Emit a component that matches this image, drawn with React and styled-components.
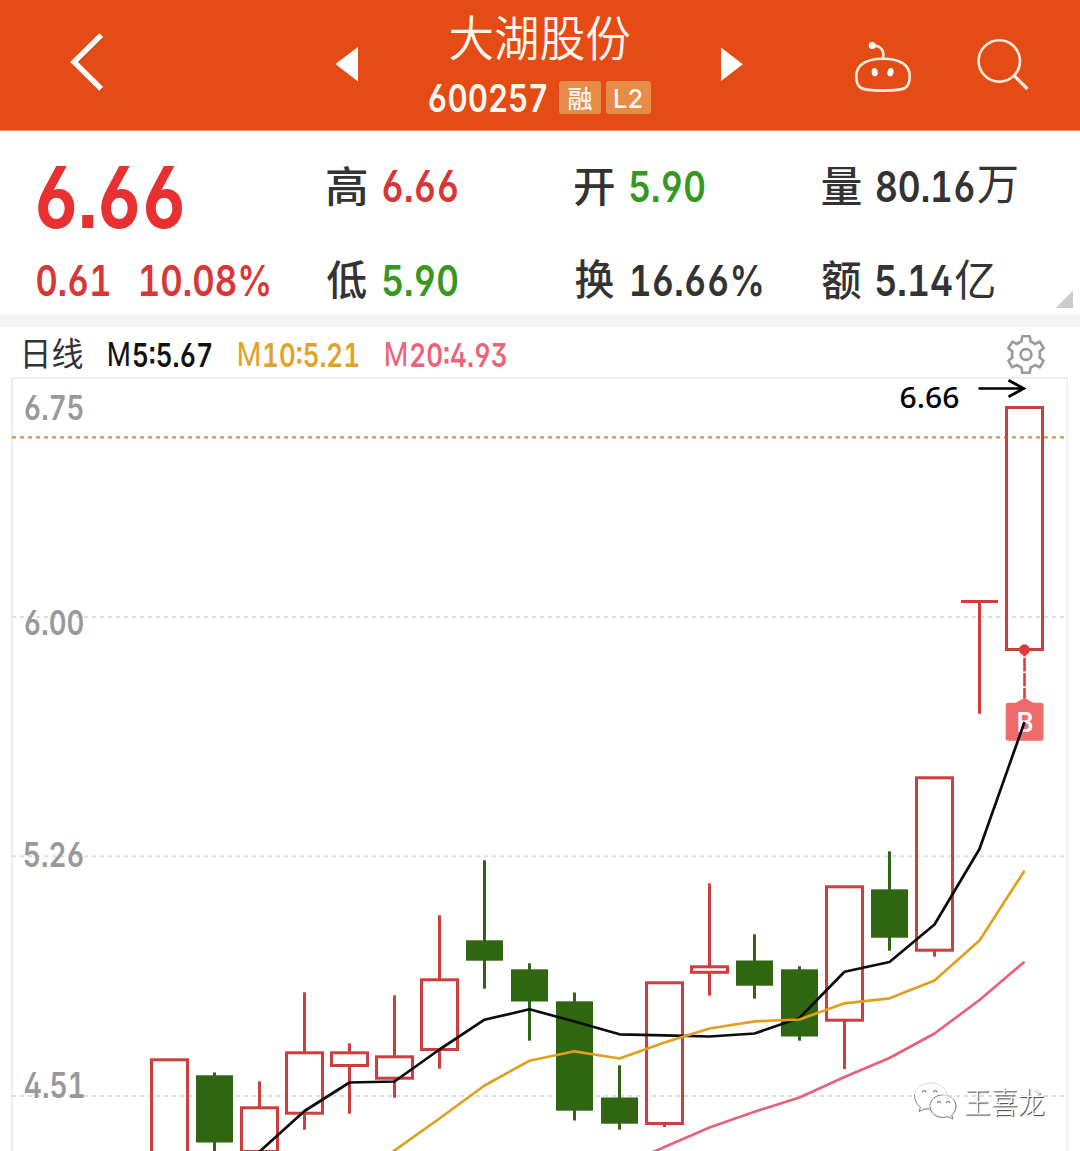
import React, { useLayoutEffect, useRef, useState } from 'react';
import styled, { createGlobalStyle } from 'styled-components';

const LATIN = 'Roboto, "Noto Sans CJK SC", sans-serif';
const DIGITS = 'Inter, Roboto, sans-serif';
const CJK = '"Noto Sans CJK SC", sans-serif';
const HUMAN = '"Noto Sans", "Open Sans", sans-serif';

const Global = createGlobalStyle`
  html, body { margin: 0; padding: 0; background: #fff; }
  body { width: 1080px; height: 1151px; overflow: hidden; font-family: ${LATIN}; }
  * { box-sizing: border-box; }
`;

/* Text whose visible glyphs fill a box of a given width and height. */
const GlyphBox = styled.span`
  display: block;
  flex: none;
  width: ${(p) => p.$w}px;
  height: ${(p) => p.$h}px;
  margin-left: ${(p) => p.$ml || 0}px;
  margin-top: ${(p) => p.$mt || 0}px;
  color: ${(p) => p.$color || 'inherit'};
`;

const Glyphs = styled.span`
  display: block;
  width: max-content;
  height: 0;
  line-height: 0;
  white-space: pre;
  transform-origin: 0 0;
  font-family: ${(p) => p.$family};
  font-weight: ${(p) => p.$weight};
  font-size: ${(p) => p.$size}px;
  font-feature-settings: 'ss01' 1, 'ss07' 1, 'tnum' 1;
  text-shadow: ${(p) => p.$shadow || 'none'};
`;

function Fit({ children, w, h, ml, mt, color, family = DIGITS, weight = 600, shadow }) {
  const ref = useRef(null);
  const [transform, setTransform] = useState('none');
  const cjk = family === CJK;
  const size = Math.round(cjk ? h * 1.07 : h / 0.73);

  useLayoutEffect(() => {
    const ctx = document.createElement('canvas').getContext('2d');
    ctx.font = `${weight} ${size}px ${family}`;
    const box = ctx.measureText(children);
    const base = (box.fontBoundingBoxAscent - box.fontBoundingBoxDescent) / 2;
    ctx.font = `${weight} ${size * 10}px ${family}`;
    const m = ctx.measureText(children);
    const ascent = m.actualBoundingBoxAscent / 10;
    // side bearings of the outer glyphs; tabular digits are centred in one common advance
    const tab = ctx.measureText('0').width;
    const bearing = (ch, side) => {
      const g = ctx.measureText(ch);
      const extra = /\d/.test(ch) ? (tab - g.width) / 2 : 0;
      const own = side === 'left' ? -g.actualBoundingBoxLeft : g.width - g.actualBoundingBoxRight;
      return (own + extra) / 10;
    };
    const left = bearing(children[0], 'left');
    const right = bearing(children[children.length - 1], 'right');
    const sx = w / (ref.current.offsetWidth - left - right);
    const sy = h / (ascent + m.actualBoundingBoxDescent / 10);
    setTransform(`translate(${-left * sx}px, ${sy * (ascent - base)}px) scale(${sx}, ${sy})`);
  }, [children, w, h, family, weight, size]);

  return (
    <GlyphBox $w={w} $h={h} $ml={ml} $mt={mt} $color={color}>
      <Glyphs ref={ref} $family={family} $weight={weight} $size={size} $shadow={shadow} style={{ transform }}>
        {children}
      </Glyphs>
    </GlyphBox>
  );
}

const Page = styled.main`
  width: 1080px;
  height: 1151px;
  display: flex;
  flex-direction: column;
  background: #fff;
  overflow: hidden;
`;

/* ---------- header ---------- */
const Header = styled.header`
  flex: none;
  height: 131px;
  display: flex;
  align-items: flex-start;
  background: #e54c15;
  border-bottom: 1px solid #e2937b;
  color: #fff8f2;
`;

const IconButton = styled.button`
  flex: none;
  padding: 0;
  border: 0;
  background: none;
  color: #fff;
  width: ${(p) => p.$w}px;
  height: ${(p) => p.$h}px;
  margin: ${(p) => p.$top}px 0 0 ${(p) => p.$left || 0}px;
  svg { display: block; overflow: visible; }
`;

const Heading = styled.div`
  width: 363px;
  padding-top: 16.5px;
  display: flex;
  flex-direction: column;
  align-items: center;
  gap: 20.5px;
`;

const CodeRow = styled.div`
  height: 33px;
  margin-left: 1.5px;
  display: flex;
  align-items: center;
`;

const Badge = styled.span`
  width: ${(p) => p.$w}px;
  height: 33px;
  margin-left: ${(p) => p.$ml}px;
  display: flex;
  align-items: center;
  justify-content: center;
  border-radius: 3px;
  background: #e58c49;
`;

/* ---------- quote ---------- */
const Quote = styled.section`
  flex: none;
  height: 183px;
  display: flex;
  align-items: flex-start;
  color: #333;
`;

const PriceColumn = styled.div`
  width: 327px;
  padding: 33.7px 0 0 36.5px;
  display: flex;
  flex-direction: column;
  gap: 35.4px;
  color: #e83030;
`;

const Change = styled.div`
  display: flex;
  color: #d93636;
`;

const StatColumn = styled.div`
  width: ${(p) => p.$w}px;
  padding-top: 35px;
  display: flex;
  flex-direction: column;
  gap: 54px;
`;

const Stat = styled.div`
  height: 40px;
  display: flex;
  align-items: center;
`;

const Corner = styled.i`
  width: 17.5px;
  height: 17.5px;
  align-self: flex-end;
  margin-bottom: 6px;
  background: #cbcbcb;
  clip-path: polygon(100% 0, 100% 100%, 0 100%);
`;

const Divider = styled.div`
  flex: none;
  height: 12.5px;
  background: #f4f4f4;
`;

/* ---------- chart ---------- */
const Legend = styled.div`
  flex: none;
  height: 50.5px;
  padding: 4px 0 0 23px;
  display: flex;
  align-items: center;
`;

const Series = styled.div`
  display: flex;
  align-items: center;
  margin-left: ${(p) => p.$ml}px;
  color: ${(p) => p.$color};
`;

const ChartArea = styled.section`
  position: relative;
  flex: none;
  height: 774px;
  svg { display: block; }
`;

const Overlay = styled.div`
  position: absolute;
  left: ${(p) => p.$x}px;
  top: ${(p) => p.$y - 377}px;
  color: ${(p) => p.$color};
`;

const Watermark = styled.div`
  position: absolute;
  left: 913px;
  top: 704px;
  display: flex;
  align-items: flex-start;
  color: #fff;
`;

const RED = '#cb3f3e';
const GREEN = '#306612';

/* [x, rising, high, body top, body bottom, low] */
const CANDLES = [
  [169.5, true, 1058.3, 1058.3, 1160, 1160],
  [214.5, false, 1072.5, 1075.3, 1142.5, 1160],
  [259.5, true, 1081.3, 1106.3, 1153, 1160],
  [304.5, true, 992.3, 1051.3, 1114.7, 1129.7],
  [349.5, true, 1043.3, 1051.3, 1067, 1113.7],
  [394.5, true, 995.3, 1055.3, 1079.7, 1097.7],
  [439.5, true, 915.3, 978.3, 1051, 1068.7],
  [484.5, false, 860.3, 940.3, 960.7, 988.7],
  [529.5, false, 963.3, 969.3, 1001.5, 1040.7],
  [574.5, false, 992.5, 1001.3, 1110.7, 1120.5],
  [619.5, false, 1065.3, 1097.5, 1123.7, 1129.7],
  [664.5, true, 981.3, 981.3, 1125, 1127],
  [709.5, true, 883.3, 965.3, 973.8, 995.7],
  [754.5, false, 934.3, 960.5, 985.7, 998.7],
  [799.5, false, 966.3, 969.3, 1036.5, 1040.7],
  [844.5, true, 885.3, 885.3, 1021.7, 1069],
  [889.5, false, 851.3, 889.3, 937.7, 950.7],
  [934.5, true, 776.3, 776.3, 951.7, 956.7],
  [1024.5, true, 406, 406, 651, 651],
];

const MA5 = '258,1153 304.5,1111 349.5,1082.5 394.5,1081.5 439.5,1049.5 484.5,1019.7 529.5,1009.3 574.5,1021.5 619.5,1034.3 664.5,1035.3 709.5,1036.5 754.5,1033.5 799.5,1018 844.5,971.7 889.5,962 934.5,924.5 979.5,849 1024.5,722';
const MA10 = '391,1153 439.5,1118.5 484.5,1085.5 529.5,1060.7 574.5,1051.3 619.5,1058.5 664.5,1042.5 709.5,1028.5 754.5,1021.3 799.5,1019.5 844.5,1003.3 889.5,998.3 934.5,980.5 979.5,940.5 1024.5,870.7';
const MA20 = '651,1153 664.5,1147 709.5,1127.5 754.5,1111.7 799.5,1097.5 844.5,1077 889.5,1058 934.5,1033.5 979.5,1000 1024.5,961.7';

const AXIS = [
  ['6.75', 394],
  ['6.00', 609.3],
  ['5.26', 840.5],
  ['4.51', 1071.5],
];

function Candle({ x, rising, high, top, bottom, low }) {
  const color = rising ? RED : GREEN;
  return (
    <g stroke={color} strokeWidth="3" fill="none">
      {high < top && <line x1={x} x2={x} y1={high} y2={top + 1} />}
      {low > bottom && <line x1={x} x2={x} y1={bottom - 1} y2={low} />}
      {rising ? (
        <rect x={x - 18} y={top + 1.5} width="36" height={bottom - top - 3} />
      ) : (
        <rect x={x - 18.5} y={top} width="37" height={bottom - top} fill={color} stroke="none" />
      )}
    </g>
  );
}

function CandleChart() {
  return (
    <svg width="1080" height="774" viewBox="0 377 1080 774">
      <g stroke="#ebebeb" fill="none">
        <line x1="11" x2="1068" y1="378" y2="378" strokeWidth="1.6" />
        <line x1="12" x2="12" y1="377.5" y2="1151" strokeWidth="2" />
        <line x1="1067.4" x2="1067.4" y1="377.5" y2="1151" strokeWidth="1.2" />
      </g>
      <g stroke="#dedede" strokeWidth="2" strokeDasharray="4 4">
        {[617, 856.3, 1096].map((y) => (
          <line key={y} x1="12" x2="1064" y1={y} y2={y} />
        ))}
      </g>
      <line x1="12" x2="1064" y1="437.4" y2="437.4" stroke="#cf9355" strokeWidth="2.4" strokeDasharray="4 4" />
      {CANDLES.map(([x, rising, high, top, bottom, low]) => (
        <Candle key={x} {...{ x, rising, high, top, bottom, low }} />
      ))}
      <path d="M961 601.6H998M979.5 601.6V713.7" stroke="#d63a3a" strokeWidth="3" fill="none" />
      <path d="M1024.5 650V700" stroke="#dc3c3c" strokeWidth="2.6" strokeDasharray="13.5 1.5" strokeDashoffset="7" />
      <circle cx="1024.4" cy="649.7" r="5.4" fill="#e23a38" />
      <path
        d="M1016 702.8L1024.5 697.8L1033 702.8H1041a2.5 2.5 0 0 1 2.5 2.5V738.3a2.5 2.5 0 0 1-2.5 2.5H1008.2a2.5 2.5 0 0 1-2.5-2.5V705.3a2.5 2.5 0 0 1 2.5-2.5Z"
        fill="#ee6c6c"
      />
      <text x="1025" y="732" textAnchor="middle" fill="#fff" fontFamily={LATIN} fontWeight="500" fontSize="27">
        B
      </text>
      <g fill="none" strokeWidth="2.7" strokeLinejoin="round">
        <polyline points={MA5} stroke="#0c0c0c" />
        <polyline points={MA10} stroke="#e0a01c" />
        <polyline points={MA20} stroke="#e8617a" />
      </g>
      <path d="M978.5 388.5H1023M1008.5 380.3L1023.8 388.5L1008.5 396.8" stroke="#000" strokeWidth="2.7" fill="none" />
    </svg>
  );
}

function WechatMark() {
  return (
    <svg width="44" height="40" viewBox="0 0 44 40" fill="#fff" strokeLinecap="round">
      <path
        d="M18 2C8.5 2 1.5 8 1.5 15.5c0 4.5 2.5 8.2 6 10.5l-1.5 4.5 6-2.7c2 .6 4 .8 6 .8 9.5 0 16.5-5.8 16.5-13.1S27.5 2 18 2Z"
        stroke="#d0d0d0"
        strokeWidth=".8"
      />
      <path d="M1.5 14c0 5 2.3 9.5 6 12l-1.5 4.5 6-2.7h4" fill="none" stroke="#888" strokeWidth="1" />
      <path
        d="M30 14c-7.5 0-13 5-13 11s5.5 11.5 13 11.5c1.8 0 3.5-.3 5-.8l5 2.3-1.3-4c2.7-2.2 4.3-5.4 4.3-9 0-6-5.5-11-13-11Z"
        stroke="#bbb"
        strokeWidth=".8"
      />
      <path d="M17 26c.6 6 6 10.5 13 10.5 1.8 0 3.5-.3 5-.8l5 2.3-1.3-4c2.7-2.2 4.3-5.4 4.3-9 0-2.5-1-5-2.7-7M17 24c.5-5 5-9.5 11-10" fill="none" stroke="#888" strokeWidth="1" />
      <g fill="none" stroke="#777" strokeWidth="1.1">
        <path d="M9.5 11a1.8 1.8 0 0 1 3.5 0M20.5 11a1.8 1.8 0 0 1 3.5 0" />
        <path d="M24.5 21.5a1.6 1.6 0 0 1 3 0M33.5 21.5a1.6 1.6 0 0 1 3 0" />
      </g>
    </svg>
  );
}

const UP = '#d93636';
const DOWN = '#35981f';

export default function App() {
  return (
    <Page>
      <Global />
      <Header>
        <IconButton $w={34} $h={58} $top={33} $left={70} aria-label="back">
          <svg width="34" height="58" viewBox="0 0 34 58">
            <path d="M31.2 2.2L4 29L31.2 55.8" fill="none" stroke="#a83a12" strokeOpacity=".45" strokeWidth="5" transform="translate(.5 1.5)" />
            <path d="M31.2 2.2L4 29L31.2 55.8" fill="none" stroke="#fff" strokeWidth="5.4" />
          </svg>
        </IconButton>
        <IconButton $w={23} $h={35} $top={47} $left={231} aria-label="previous">
          <svg width="23" height="35" viewBox="0 0 23 35">
            <path d="M23 0V34.5L.4 17Z" fill="#fff" />
          </svg>
        </IconButton>
        <Heading>
          <Fit w={180} h={44.3} family={CJK} weight={350}>大湖股份</Fit>
          <CodeRow>
            <Fit w={117} h={28.8} mt={1}>600257</Fit>
            <Badge $w={42} $ml={12.9}>
              <Fit w={23} h={23} mt={2} family={CJK} weight={500}>融</Fit>
            </Badge>
            <Badge $w={45} $ml={5}>
              <Fit w={27.3} h={19.2} mt={1} weight={500}>L2</Fit>
            </Badge>
          </CodeRow>
        </Heading>
        <IconButton $w={22} $h={34} $top={47} aria-label="next">
          <svg width="22" height="34" viewBox="0 0 22 34">
            <path d="M0 .5V34L21.8 17.2Z" fill="#fff" />
          </svg>
        </IconButton>
        <IconButton $w={56} $h={50} $top={41.5} $left={111.5} aria-label="assistant">
          <svg width="56" height="50" viewBox="0 0 56 50" fill="none" stroke="#ffeede" strokeWidth="2.6">
            <path d="M28 16.7C10.5 16.7 1.3 23.5 1.3 34C1.3 46.5 5 48.6 28 48.6S54.7 46.5 54.7 34C54.7 23.5 45.5 16.7 28 16.7Z" />
            <path d="M28 16.5C29.6 8.5 26 4.2 18.5 3.4" />
            <circle cx="17.2" cy="3.5" r="3.5" fill="#fff" stroke="none" />
            <ellipse cx="19.7" cy="30.2" rx="3" ry="4.1" transform="rotate(-10 19.7 30.2)" fill="#fff" stroke="none" />
            <ellipse cx="35.5" cy="30.2" rx="3" ry="4.1" transform="rotate(14 35.5 30.2)" fill="#fff" stroke="none" />
          </svg>
        </IconButton>
        <IconButton $w={51} $h={51} $top={39} $left={66.5} aria-label="search">
          <svg width="51" height="51" viewBox="0 0 51 51" fill="none" stroke="#ffeede" strokeWidth="2.6">
            <circle cx="22.3" cy="22" r="20.7" />
            <path d="M37 36.5L50.5 50" strokeWidth="3.2" />
          </svg>
        </IconButton>
      </Header>

      <Quote>
        <PriceColumn>
          <Fit w={146} h={65} weight={700}>6.66</Fit>
          <Change>
            <Fit w={68} h={32}>0.61</Fit>
            <Fit w={126} h={32} ml={38.5}>10.08%</Fit>
          </Change>
        </PriceColumn>
        <StatColumn $w={248}>
          <Stat>
            <Fit w={39.6} h={40} mt={-1} family={CJK} weight={500}>高</Fit>
            <Fit w={74} h={33} ml={16} mt={1} color={UP}>6.66</Fit>
          </Stat>
          <Stat>
            <Fit w={39.6} h={39.5} family={CJK} weight={500}>低</Fit>
            <Fit w={73} h={32} ml={17.2} mt={1.5} color={DOWN}>5.90</Fit>
          </Stat>
        </StatColumn>
        <StatColumn $w={246.7}>
          <Stat>
            <Fit w={38.6} h={37.7} mt={1.5} family={CJK} weight={500}>开</Fit>
            <Fit w={73} h={32} ml={17} mt={1.5} color={DOWN}>5.90</Fit>
          </Stat>
          <Stat>
            <Fit w={38.6} h={39.7} family={CJK} weight={500}>换</Fit>
            <Fit w={127.5} h={32} ml={20.3} mt={1.5}>16.66%</Fit>
          </Stat>
        </StatColumn>
        <StatColumn $w={234}>
          <Stat>
            <Fit w={39} h={37.5} family={CJK} weight={500}>量</Fit>
            <Fit w={97} h={32} ml={16.5} mt={1.5}>80.16</Fit>
            <Fit w={39} h={37.5} ml={3.8} family={CJK} weight={400}>万</Fit>
          </Stat>
          <Stat>
            <Fit w={39} h={39} family={CJK} weight={500}>额</Fit>
            <Fit w={74.5} h={32} ml={16.6} mt={1.5}>5.14</Fit>
            <Fit w={39.5} h={40} ml={2.9} mt={-3} family={CJK} weight={400}>亿</Fit>
          </Stat>
        </StatColumn>
        <Corner />
      </Quote>
      <Divider />

      <Legend>
        <Fit w={57.5} h={30} ml={1.5} mt={1} family={CJK} weight={400} color="#333">日线</Fit>
        <Series $ml={26.8} $color="#111">
          <Fit w={20} h={24} mt={2} family={LATIN} weight={400}>M</Fit>
          <Fit w={77} h={24.5} mt={2} ml={5}>5:5.67</Fit>
        </Series>
        <Series $ml={28} $color="#e0a228">
          <Fit w={20.4} h={24} mt={2} family={LATIN} weight={400}>M</Fit>
          <Fit w={89} h={24.5} mt={2} ml={7}>10:5.21</Fit>
        </Series>
        <Series $ml={30.8} $color="#ea6479">
          <Fit w={20.4} h={24} mt={2} family={LATIN} weight={400}>M</Fit>
          <Fit w={95} h={24.5} mt={2} ml={4.5}>20:4.93</Fit>
        </Series>
        <IconButton $w={38} $h={39} $top={1} $left={500.7} aria-label="chart settings">
          <svg width="38" height="39" viewBox="0 0 38 39" fill="none" stroke="#9a9a9a" strokeWidth="2.6" strokeLinejoin="round">
            <path d="M15.2 1.3H22.8L23.6 6.6Q26 7.4 28 9L32.7 6.6L36.6 13.2L32.6 16.5Q33.3 19.5 32.6 22.5L36.6 25.8L32.7 32.4L28 30Q26 31.6 23.6 32.4L22.8 37.7H15.2L14.4 32.4Q12 31.6 10 30L5.3 32.4L1.4 25.8L5.4 22.5Q4.7 19.5 5.4 16.5L1.4 13.2L5.3 6.6L10 9Q12 7.4 14.4 6.6Z" />
            <circle cx="19" cy="19.5" r="5.4" />
          </svg>
        </IconButton>
      </Legend>

      <ChartArea>
        <CandleChart />
        {AXIS.map(([label, y]) => (
          <Overlay key={label} $x={24.5} $y={y} $color="#999">
            <Fit w={label.endsWith('1') ? 56 : 58.3} h={26.3}>{label}</Fit>
          </Overlay>
        ))}
        <Overlay $x={900.5} $y={386.7} $color="#000">
          <Fit w={57.5} h={21.5} family={HUMAN} weight={500}>6.66</Fit>
        </Overlay>
        <Watermark>
          <WechatMark />
          <Fit w={79} h={27} ml={8} mt={7} family={CJK} weight={300} shadow="1px 1px 1px #333">王喜龙</Fit>
        </Watermark>
      </ChartArea>
    </Page>
  );
}
